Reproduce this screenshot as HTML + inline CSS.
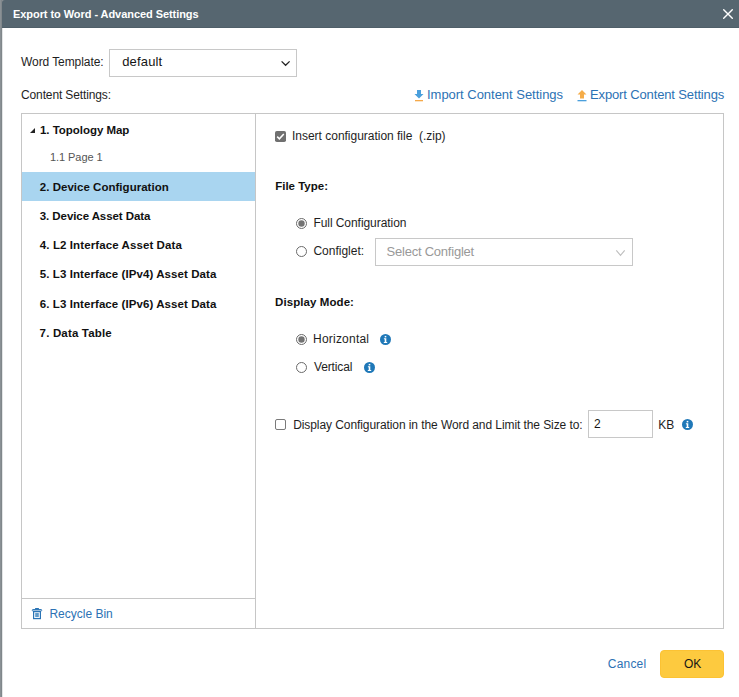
<!DOCTYPE html>
<html><head><meta charset="utf-8">
<style>
*{box-sizing:border-box;margin:0;padding:0}
html,body{width:739px;height:697px;overflow:hidden;background:#fff;font-family:"Liberation Sans",sans-serif;}
.t{position:absolute;white-space:pre}
.bl{display:inline-block;width:0;height:0;vertical-align:baseline}
.s{position:absolute}
</style></head>
<body>
<div class="s" style="left:0;top:0;width:1px;height:697px;background:#8a9195"></div>
<div class="s" style="left:1px;top:0;width:1px;height:697px;background:#80878b"></div>
<div class="s" style="left:2px;top:28px;width:1px;height:669px;background:#e3e5e6"></div>
<div class="s" style="left:2px;top:0;width:4px;height:4px;background:#8a9195"></div>
<div class="s" style="left:2px;top:0;width:737px;height:28px;background:#566670;border-top-left-radius:3px;border-bottom:1px solid #4f5f69"></div>
<svg class="s" style="left:722px;top:8px" width="12" height="12" viewBox="0 0 12 12"><path d="M1.7 1.7L10.3 10.3M10.3 1.7L1.7 10.3" stroke="#fff" stroke-width="1.4" stroke-linecap="round"/></svg>

<div class="s" style="left:109px;top:49px;width:188px;height:28px;border:1px solid #c8c8c8"></div>
<svg class="s" style="left:280px;top:59px" width="12" height="9" viewBox="0 0 12 9"><path d="M1.6 2.4L5.6 6.3L9.6 2.4" stroke="#222" stroke-width="1.3" fill="none"/></svg>

<svg class="s" style="left:414px;top:89px" width="10" height="13" viewBox="0 0 10 13"><path d="M3 1h4v4h2.5L5 9.5L0.5 5H3z" fill="#4a9fdc"/><rect x="1" y="11" width="8" height="1.3" fill="#f5a94a"/></svg>
<svg class="s" style="left:577px;top:89px" width="10" height="13" viewBox="0 0 10 13"><path d="M3 9.5h4v-4h2.5L5 1L0.5 5.5H3z" fill="#f5ac48"/><rect x="0.5" y="11" width="9" height="1.3" fill="#4a9fdc"/></svg>

<div class="s" style="left:21px;top:113px;width:703px;height:516px;border:1px solid #c6c6c6"></div>
<div class="s" style="left:255px;top:114px;width:1px;height:514px;background:#c6c6c6"></div>

<svg class="s" style="left:29px;top:127px" width="7" height="7" viewBox="0 0 7 7"><path d="M6 1V6H1z" fill="#222"/></svg>
<div class="s" style="left:22px;top:172px;width:233px;height:29px;background:#a9d5f0"></div>

<div class="s" style="left:22px;top:598px;width:233px;height:1px;background:#c6c6c6"></div>
<svg class="s" style="left:31px;top:607px" width="12" height="13" viewBox="0 0 12 13"><path d="M4.1 1h3.8v1.3H4.1z" fill="#2a74b5"/><rect x="1.3" y="2.5" width="9.4" height="1.5" rx="0.6" fill="none" stroke="#2a74b5" stroke-width="0.95"/><rect x="2.6" y="4.6" width="6.8" height="7" fill="none" stroke="#2a74b5" stroke-width="1.2"/><rect x="4.2" y="5.9" width="3.6" height="4.2" fill="#7fb0d6"/><path d="M5.1 5.9v4.2M6.9 5.9v4.2" stroke="#2a74b5" stroke-width="0.6"/></svg>

<svg class="s" style="left:275px;top:131px" width="11" height="11" viewBox="0 0 11 11"><rect x="0" y="0" width="11" height="11" rx="1.8" fill="#707070"/><path d="M2.2 5.6L4.4 7.8L8.8 3" stroke="#fff" stroke-width="1.5" fill="none"/></svg>

<svg class="s" style="left:296px;top:218px" width="11" height="11" viewBox="0 0 11 11"><circle cx="5.5" cy="5.5" r="5" fill="#fff" stroke="#6a6a6a" stroke-width="1"/><circle cx="5.5" cy="5.5" r="3.2" fill="#737373"/></svg>
<svg class="s" style="left:296px;top:246px" width="11" height="11" viewBox="0 0 11 11"><circle cx="5.5" cy="5.5" r="5" fill="#fff" stroke="#6a6a6a" stroke-width="1"/></svg>
<div class="s" style="left:375px;top:238px;width:258px;height:28px;border:1px solid #c8c8c8"></div>
<svg class="s" style="left:615px;top:249px" width="11" height="8" viewBox="0 0 11 8"><path d="M1.3 1.3L5.5 6.3L9.7 1.3" stroke="#bdbdbd" stroke-width="1.1" fill="none"/></svg>

<svg class="s" style="left:296px;top:334px" width="11" height="11" viewBox="0 0 11 11"><circle cx="5.5" cy="5.5" r="5" fill="#fff" stroke="#6a6a6a" stroke-width="1"/><circle cx="5.5" cy="5.5" r="3.2" fill="#737373"/></svg>
<svg class="s" style="left:296px;top:362px" width="11" height="11" viewBox="0 0 11 11"><circle cx="5.5" cy="5.5" r="5" fill="#fff" stroke="#6a6a6a" stroke-width="1"/></svg>

<svg class="s" style="left:380px;top:334px" width="11" height="11" viewBox="0 0 11 11"><circle cx="5.5" cy="5.5" r="5.5" fill="#1f78b8"/><rect x="4.7" y="1.9" width="1.6" height="1.5" fill="#fff"/><path d="M3.9 4.3h2.4v3.8h0.9v0.9h-3.4v-0.9h0.9v-2.9h-0.8z" fill="#fff"/></svg>
<svg class="s" style="left:364px;top:362px" width="11" height="11" viewBox="0 0 11 11"><circle cx="5.5" cy="5.5" r="5.5" fill="#1f78b8"/><rect x="4.7" y="1.9" width="1.6" height="1.5" fill="#fff"/><path d="M3.9 4.3h2.4v3.8h0.9v0.9h-3.4v-0.9h0.9v-2.9h-0.8z" fill="#fff"/></svg>

<div class="s" style="left:275px;top:419px;width:11px;height:11px;border:1px solid #7a7a7a;border-radius:2px"></div>
<div class="s" style="left:588px;top:410px;width:65px;height:28px;border:1px solid #c8c8c8"></div>
<svg class="s" style="left:682px;top:419px" width="11" height="11" viewBox="0 0 11 11"><circle cx="5.5" cy="5.5" r="5.5" fill="#1f78b8"/><rect x="4.7" y="1.9" width="1.6" height="1.5" fill="#fff"/><path d="M3.9 4.3h2.4v3.8h0.9v0.9h-3.4v-0.9h0.9v-2.9h-0.8z" fill="#fff"/></svg>

<div class="s" style="left:660px;top:650px;width:64px;height:28px;background:#fdca3f;border:1px solid #fcc233;border-radius:4px"></div>

<div class="t" id="title" style="left:13.00px;top:9.01px;font-size:11px;font-weight:bold;color:#ffffff;letter-spacing:-0.061px;line-height:11px">Export to Word - Advanced Settings<span class="bl"></span></div>
<div class="t" id="wt" style="left:21.00px;top:56.00px;font-size:12px;font-weight:normal;color:#1e1e1e;letter-spacing:-0.077px;line-height:12px">Word Template:<span class="bl"></span></div>
<div class="t" id="def" style="left:122.20px;top:55.01px;font-size:13px;font-weight:normal;color:#151515;letter-spacing:0.167px;line-height:13px">default<span class="bl"></span></div>
<div class="t" id="cs" style="left:21.00px;top:89.00px;font-size:12px;font-weight:normal;color:#1e1e1e;letter-spacing:-0.125px;line-height:12px">Content Settings:<span class="bl"></span></div>
<div class="t" id="imp" style="left:427.00px;top:88.01px;font-size:13px;font-weight:normal;color:#2c72b4;letter-spacing:-0.023px;line-height:13px">Import Content Settings<span class="bl"></span></div>
<div class="t" id="exp" style="left:590.00px;top:88.01px;font-size:13px;font-weight:normal;color:#2c72b4;letter-spacing:-0.136px;line-height:13px">Export Content Settings<span class="bl"></span></div>
<div class="t" id="t1" style="left:40.00px;top:125.00px;font-size:11.5px;font-weight:bold;color:#111111;letter-spacing:-0.036px;line-height:11.5px">1. Topology Map<span class="bl"></span></div>
<div class="t" id="t11" style="left:50.00px;top:152.00px;font-size:11px;font-weight:normal;color:#555555;letter-spacing:-0.067px;line-height:11px">1.1 Page 1<span class="bl"></span></div>
<div class="t" id="t2" style="left:39.80px;top:182.00px;font-size:11.5px;font-weight:bold;color:#111111;letter-spacing:0.023px;line-height:11.5px">2. Device Configuration<span class="bl"></span></div>
<div class="t" id="t3" style="left:39.80px;top:211.00px;font-size:11.5px;font-weight:bold;color:#111111;letter-spacing:-0.079px;line-height:11.5px">3. Device Asset Data<span class="bl"></span></div>
<div class="t" id="t4" style="left:39.80px;top:240.00px;font-size:11.5px;font-weight:bold;color:#111111;letter-spacing:0.100px;line-height:11.5px">4. L2 Interface Asset Data<span class="bl"></span></div>
<div class="t" id="t5" style="left:39.80px;top:269.01px;font-size:11.5px;font-weight:bold;color:#111111;letter-spacing:0.078px;line-height:11.5px">5. L3 Interface (IPv4) Asset Data<span class="bl"></span></div>
<div class="t" id="t6" style="left:39.80px;top:299.01px;font-size:11.5px;font-weight:bold;color:#111111;letter-spacing:0.078px;line-height:11.5px">6. L3 Interface (IPv6) Asset Data<span class="bl"></span></div>
<div class="t" id="t7" style="left:39.60px;top:328.01px;font-size:11.5px;font-weight:bold;color:#111111;letter-spacing:0.167px;line-height:11.5px">7. Data Table<span class="bl"></span></div>
<div class="t" id="rb" style="left:49.40px;top:608.00px;font-size:12px;font-weight:normal;color:#2c72b4;letter-spacing:0.000px;line-height:12px">Recycle Bin<span class="bl"></span></div>
<div class="t" id="ins" style="left:292.00px;top:130.00px;font-size:12px;font-weight:normal;color:#1e1e1e;letter-spacing:-0.016px;line-height:12px">Insert configuration file  (.zip)<span class="bl"></span></div>
<div class="t" id="ft" style="left:275.20px;top:181.00px;font-size:11.5px;font-weight:bold;color:#111111;letter-spacing:0.000px;line-height:11.5px">File Type:<span class="bl"></span></div>
<div class="t" id="fc" style="left:313.40px;top:217.00px;font-size:12px;font-weight:normal;color:#1e1e1e;letter-spacing:-0.059px;line-height:12px">Full Configuration<span class="bl"></span></div>
<div class="t" id="cfg" style="left:313.40px;top:245.00px;font-size:12px;font-weight:normal;color:#1e1e1e;letter-spacing:0.000px;line-height:12px">Configlet:<span class="bl"></span></div>
<div class="t" id="sc" style="left:386.60px;top:245.01px;font-size:13px;font-weight:normal;color:#999999;letter-spacing:-0.233px;line-height:13px">Select Configlet<span class="bl"></span></div>
<div class="t" id="dm" style="left:275.00px;top:297.01px;font-size:11.5px;font-weight:bold;color:#111111;letter-spacing:0.083px;line-height:11.5px">Display Mode:<span class="bl"></span></div>
<div class="t" id="hz" style="left:313.00px;top:333.00px;font-size:12px;font-weight:normal;color:#1e1e1e;letter-spacing:0.222px;line-height:12px">Horizontal<span class="bl"></span></div>
<div class="t" id="vt" style="left:314.00px;top:361.00px;font-size:12px;font-weight:normal;color:#1e1e1e;letter-spacing:-0.143px;line-height:12px">Vertical<span class="bl"></span></div>
<div class="t" id="dc" style="left:293.20px;top:419.00px;font-size:12px;font-weight:normal;color:#1e1e1e;letter-spacing:-0.082px;line-height:12px">Display Configuration in the Word and Limit the Size to:<span class="bl"></span></div>
<div class="t" id="two" style="left:594.00px;top:418.00px;font-size:12px;font-weight:normal;color:#151515;letter-spacing:0.000px;line-height:12px">2<span class="bl"></span></div>
<div class="t" id="kb" style="left:658.20px;top:419.00px;font-size:12px;font-weight:normal;color:#1e1e1e;letter-spacing:0.000px;line-height:12px">KB<span class="bl"></span></div>
<div class="t" id="cancel" style="left:607.80px;top:658.00px;font-size:12px;font-weight:normal;color:#2c72b4;letter-spacing:0.200px;line-height:12px">Cancel<span class="bl"></span></div>
<div class="t" id="ok" style="left:684.00px;top:658.00px;font-size:12px;font-weight:normal;color:#151515;letter-spacing:0.000px;line-height:12px">OK<span class="bl"></span></div>
</body></html>
